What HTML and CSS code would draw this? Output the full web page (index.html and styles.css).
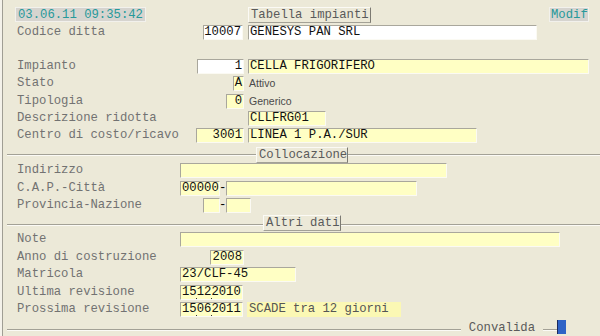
FILE: index.html
```html
<!DOCTYPE html>
<html>
<head>
<meta charset="utf-8">
<link rel="stylesheet" href="styles.css">
</head>
<body>
<div class="screen">
  <div class="hdr">
    <div class="stamp">03.06.11 09:35:42</div>
    <div class="legend leg-tab">Tabella impianti</div>
    <div class="stamp modif">Modif</div>
  </div>

  <div class="row r-codice">
    <div class="lbl">Codice ditta</div>
    <div class="fld white num f-cod">10007</div>
    <div class="fld white f-gen">GENESYS PAN SRL</div>
  </div>

  <div class="row r-first">
    <div class="lbl">Impianto</div>
    <div class="fld white num f-imp">1</div>
    <div class="fld f-cella">CELLA FRIGORIFERO</div>
  </div>
  <div class="row">
    <div class="lbl">Stato</div>
    <div class="fld num f-stato">A</div>
    <div class="note">Attivo</div>
  </div>
  <div class="row">
    <div class="lbl">Tipologia</div>
    <div class="fld num f-tipo">0</div>
    <div class="note">Generico</div>
  </div>
  <div class="row">
    <div class="lbl">Descrizione ridotta</div>
    <div class="fld f-descr">CLLFRG01</div>
  </div>
  <div class="row">
    <div class="lbl">Centro di costo/ricavo</div>
    <div class="fld num f-centro">3001</div>
    <div class="fld f-linea">LINEA 1 P.A./SUR</div>
  </div>

  <div class="sep sep-coll">
    <div class="legend leg-coll">Collocazione</div>
  </div>

  <div class="row r-tight">
    <div class="lbl">Indirizzo</div>
    <div class="fld f-ind"></div>
  </div>
  <div class="row r-tight">
    <div class="lbl">C.A.P.-Città</div>
    <div class="fld f-cap">00000</div>
    <div class="dash">-</div>
    <div class="fld f-citta"></div>
  </div>
  <div class="row r-tight r-prov">
    <div class="lbl">Provincia-Nazione</div>
    <div class="fld f-prov"></div>
    <div class="dash">-</div>
    <div class="fld f-naz"></div>
  </div>

  <div class="sep sep-altri">
    <div class="legend leg-altri">Altri dati</div>
  </div>

  <div class="row r-tight r-note">
    <div class="lbl">Note</div>
    <div class="fld f-note"></div>
  </div>
  <div class="row r-tight">
    <div class="lbl">Anno di costruzione</div>
    <div class="fld num f-anno">2008</div>
  </div>
  <div class="row r-tight">
    <div class="lbl">Matricola</div>
    <div class="fld f-matr">23/CLF-45</div>
  </div>
  <div class="row r-tight">
    <div class="lbl">Ultima revisione</div>
    <div class="fld date f-data">15122010</div>
  </div>
  <div class="row r-tight">
    <div class="lbl">Prossima revisione</div>
    <div class="fld date f-data">15062011</div>
    <div class="flat f-scade">SCADE tra 12 giorni</div>
  </div>

  <div class="footer">
    <div class="spacer"></div>
    <div class="conv">Convalida</div>
    <div class="conv-line"></div>
    <div class="conv-block"></div>
  </div>
</div>
</body>
</html>
```

FILE: styles.css
```css
html, body {
  margin: 0;
  padding: 0;
  background: #ECE9D8;
}

body {
  width: 600px;
  height: 336px;
  overflow: hidden;
  font-family: "Liberation Mono", "DejaVu Sans Mono", monospace;
  font-size: 12.25px;
}

.screen {
  margin-left: 2px;
  border-left: 1px solid #a09e94;
  height: 336px;
  box-sizing: border-box;
  padding-top: 7px;
  box-shadow: -2px 0 0 #f4f2ea;
}

/* header */
.hdr {
  display: flex;
  align-items: flex-start;
  height: 16px;
  padding-left: 12px;
}

.stamp {
  box-sizing: border-box;
  width: 131px;
  height: 15px;
  line-height: 14px;
  padding-left: 2px;
  background: #d6d4cf;
  border: 1px solid #f2f1ec;
  color: #27999a;
}

.modif {
  width: 40px;
  margin-left: 178px;
  padding-left: 1px;
}

.legend {
  box-sizing: border-box;
  height: 16px;
  line-height: 15px;
  padding-left: 2px;
  background: #ECE9D8;
  color: #5a5a5a;
  border-top: 1px solid #fbfaf5;
  border-left: 1px solid #fbfaf5;
  border-right: 1px solid #7c7a72;
  border-bottom: 1px solid #a3a196;
  white-space: nowrap;
}

.leg-tab {
  width: 123px;
  margin-left: 102px;
}

/* rows */
.row {
  display: flex;
  align-items: flex-start;
  height: 17.25px;
  padding-left: 14px;
}

.r-codice {
  margin-top: 2px;
  height: 15px;
}

.r-first {
  margin-top: 19px;
}

.r-tight {
  height: 17.5px;
}

.r-prov {
  height: 17px;
}

.r-note {
  margin-top: 1px;
}

.lbl {
  width: 163px;
  flex: none;
  line-height: 15px;
  color: #727272;
  white-space: nowrap;
}

.fld {
  box-sizing: border-box;
  height: 15px;
  line-height: 13px;
  padding-left: 1px;
  background: #ffffc4;
  color: #111;
  border: 1px solid;
  border-color: #a9a79c #fbfaf3 #fbfaf3 #a9a79c;
  white-space: nowrap;
  overflow: hidden;
  flex: none;
}

.white {
  background: #ffffff;
}

.date {
  background:
    linear-gradient(#333, #333) 15px 12px / 1px 1px no-repeat,
    linear-gradient(#333, #333) 30px 12px / 1px 1px no-repeat,
    #ffffc4;
}

.num {
  text-align: right;
  padding-left: 0;
  padding-right: 1px;
}

.flat {
  box-sizing: border-box;
  height: 15px;
  line-height: 15px;
  padding-left: 2px;
  background: #fbf8b4;
  color: #555;
  white-space: nowrap;
}

.note {
  font-family: "Liberation Sans", Arial, sans-serif;
  font-size: 10.5px;
  line-height: 15px;
  color: #4a4a4a;
  margin-left: 5px;
}

.dash {
  width: 6px;
  line-height: 15px;
  color: #000;
  overflow: hidden;
  text-indent: -1px;
}

.f-cod { width: 40px; margin-left: 23px; }
.f-gen { width: 289px; margin-left: 5px; }
.f-imp { width: 47px; margin-left: 17px; }
.f-cella { width: 341px; margin-left: 4px; }
.f-stato { width: 11px; margin-left: 53px; }
.f-tipo { width: 18px; margin-left: 46px; }
.f-descr { width: 78px; margin-left: 68px; }
.f-centro { width: 48px; margin-left: 16px; }
.f-linea { width: 229px; margin-left: 4px; }
.f-ind { width: 267px; }
.f-cap { width: 40px; }
.f-citta { width: 191px; }
.f-prov { width: 17px; margin-left: 23px; }
.f-naz { width: 25px; }
.f-note { width: 380px; }
.f-anno { width: 34px; margin-left: 30px; }
.f-matr { width: 116px; }
.f-data { width: 63px; }
.f-scade { width: 154px; margin-left: 4px; }

/* separators */
.sep {
  display: flex;
  align-items: flex-start;
  height: 16px;
  margin-left: 4px;
}

.sep-coll {
  margin-top: 1.75px;
  background:
    linear-gradient(#a3a196, #a3a196) 0 7px / 100% 1px no-repeat,
    linear-gradient(#fbfaf5, #fbfaf5) 0 8px / 100% 1px no-repeat;
}

.sep-altri {
  background:
    linear-gradient(#a3a196, #a3a196) 0 9px / 100% 1px no-repeat,
    linear-gradient(#fbfaf5, #fbfaf5) 0 10px / 100% 1px no-repeat;
}

.leg-coll {
  width: 92px;
  margin-left: 249px;
}

.leg-altri {
  width: 78px;
  margin-left: 256px;
}

/* footer */
.footer {
  display: flex;
  align-items: flex-start;
  height: 15px;
  margin-top: 0.5px;
  margin-left: 4px;
  margin-right: 34px;
  background:
    linear-gradient(#a3a196, #a3a196) 0 9px / 100% 1px no-repeat,
    linear-gradient(#fbfaf5, #fbfaf5) 0 10px / 100% 1px no-repeat;
}

.spacer {
  flex: 1;
}

.conv {
  background: #ECE9D8;
  color: #5a5a5a;
  line-height: 17px;
  height: 15px;
  padding: 0 8px;
}

.conv-line {
  width: 14px;
}

.conv-block {
  box-sizing: border-box;
  width: 9px;
  height: 14px;
  background: #2f63c6;
  border-left: 1px solid #1c2a5c;
}
```
